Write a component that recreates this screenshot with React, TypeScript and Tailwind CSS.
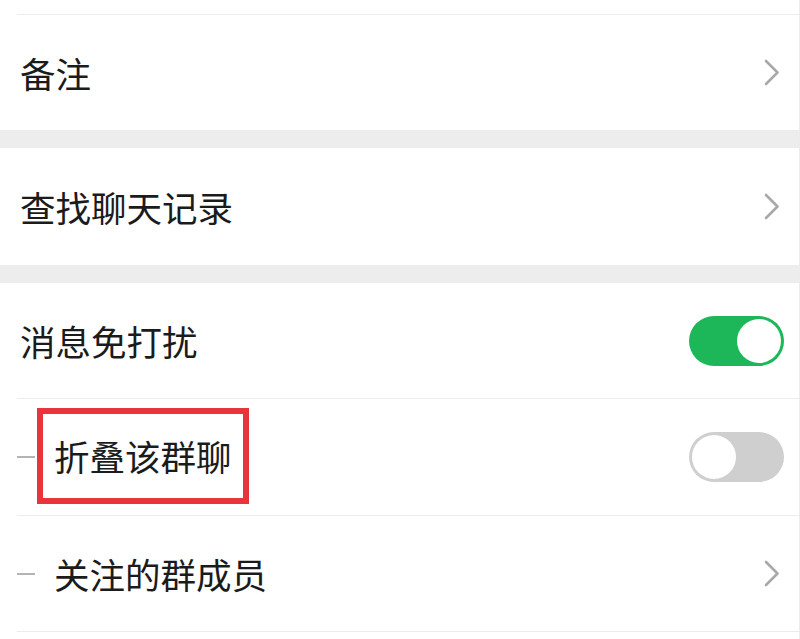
import React from "react";

const font = { fontFamily: '"Noto Sans CJK SC", "Noto Sans", sans-serif' };

const Chevron = () => (
  <svg width="16" height="27" viewBox="0 0 16 27" className="mr-[19px] shrink-0">
    <polyline
      points="2,2 13.5,13.5 2,25"
      fill="none"
      stroke="#a8a8a8"
      strokeWidth="2.6"
      strokeLinecap="round"
      strokeLinejoin="round"
    />
  </svg>
);

const Toggle = ({ on }: { on: boolean }) =>
  on ? (
    <div className="mr-[15px] flex h-[50px] w-[95px] shrink-0 items-center justify-end rounded-full bg-[#1db75a] p-[3px]">
      <div className="h-[44px] w-[44px] rounded-full bg-white" />
    </div>
  ) : (
    <div className="mr-[15px] flex h-[50px] w-[95px] shrink-0 items-center justify-start rounded-full bg-[#cfcfcf] p-[3px]">
      <div className="h-[44px] w-[44px] rounded-full bg-white" />
    </div>
  );

const Dash = () => <div className="h-[2px] w-[18px] shrink-0 bg-[#b4b4b4]" />;

const Band = () => <div className="h-[18px] bg-[#ededed]" />;

export default function App() {
  return (
    <div
      className="h-[639px] w-[800px] overflow-hidden border-r border-[#ececec] bg-white text-[#1b1b1b]"
      style={font}
    >
      <div className="h-[14px]" />
      <div className="ml-[17px] h-px bg-[#ececec]" />

      <div className="flex h-[115px] items-center justify-between pl-[20px]">
        <span className="text-[35.5px] leading-none">备注</span>
        <Chevron />
      </div>

      <Band />

      <div className="flex h-[117px] items-center justify-between pl-[20px]">
        <span className="text-[35.5px] leading-none">查找聊天记录</span>
        <Chevron />
      </div>

      <Band />

      <div className="flex h-[115px] items-center justify-between pl-[20px]">
        <span className="text-[35.5px] leading-none">消息免打扰</span>
        <Toggle on />
      </div>
      <div className="ml-[17px] h-px bg-[#ececec]" />

      <div className="flex h-[116px] items-center justify-between pl-[17px]">
        <div className="flex items-center">
          <Dash />
          <div className="ml-[2px] mt-[-2px] flex h-[96px] w-[212px] items-center border-[6px] border-[#e8353b] pl-[11px]">
            <span className="text-[35.5px] leading-none">折叠该群聊</span>
          </div>
        </div>
        <Toggle on={false} />
      </div>
      <div className="ml-[17px] h-px bg-[#ececec]" />

      <div className="flex h-[115px] items-center justify-between pl-[17px]">
        <div className="flex items-center">
          <Dash />
          <span className="ml-[19px] text-[35.5px] leading-none">关注的群成员</span>
        </div>
        <Chevron />
      </div>
      <div className="ml-[17px] h-px bg-[#ececec]" />
    </div>
  );
}
